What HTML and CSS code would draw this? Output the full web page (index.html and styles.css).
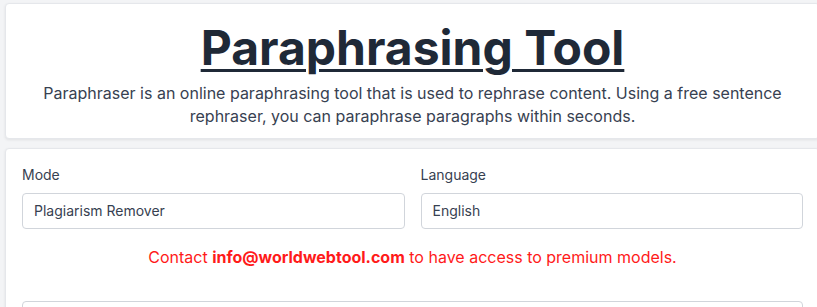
FILE: index.html
```html
<!DOCTYPE html>
<html lang="en">
<head>
  <meta charset="UTF-8" />
  <meta name="viewport" content="width=device-width, initial-scale=1.0"/>
  <title>Paraphrasing Tool</title>
  <link rel="stylesheet" href="styles.css">
</head>
<body>

  <div class="page">
    <div class="card intro">
      <h1><u>Paraphrasing Tool</u></h1>
      <p>Paraphraser is an online paraphrasing tool that is used to rephrase content. Using a free sentence rephraser, you can paraphrase paragraphs within seconds.</p>
    </div>

    <div class="card tool">
      <div class="fields">
        <div class="field">
          <label for="mode">Mode</label>
          <div class="select" id="mode">Plagiarism Remover</div>
        </div>
        <div class="field">
          <label for="lang">Language</label>
          <div class="select" id="lang">English</div>
        </div>
      </div>
      <p class="notice">Contact <b>info@worldwebtool.com</b> to have access to premium models.</p>
      <div class="editor"></div>
    </div>
  </div>

</body>
</html>
```

FILE: styles.css
```css
body {
  margin: 0;
  background: #f3f4f6;
  font-family: Inter, 'Noto Sans', sans-serif;
  color: #1f2937;
  overflow: hidden;
}
.page {
  padding: 3px 0 0 5px;
  width: 815px;
}
.card {
  background: white;
  border: 1px solid #e5e7eb;
  border-radius: 4px;
  box-shadow: 0 1px 3px rgba(0, 0, 0, 0.08);
}
.intro {
  text-align: center;
  padding: 16px 16px 10px;
  margin-bottom: 9px;
}
.intro h1 {
  margin: 0;
  font-size: 48px;
  line-height: 56px;
  font-weight: 700;
  color: #1f2937;
}
.intro u {
  text-decoration-thickness: 3px;
  text-underline-offset: 4px;
}
.intro p {
  margin: 6px 20px 0;
  font-size: 16px;
  line-height: 23px;
  color: #374151;
}
.tool {
  padding: 16px;
}
.fields {
  display: grid;
  grid-template-columns: 1fr 1fr;
  gap: 16px;
}
.field label {
  display: block;
  font-size: 14px;
  line-height: 20px;
  color: #374151;
  margin-bottom: 8px;
}
.select {
  border: 1px solid #d1d5db;
  border-radius: 4px;
  height: 34px;
  line-height: 34px;
  padding: 0 11px;
  font-size: 14px;
  color: #374151;
}
.notice {
  text-align: center;
  color: #ff1a1a;
  font-size: 16px;
  margin: 18px 0 34px;
}
.editor {
  border: 1px solid #d1d5db;
  border-radius: 4px;
  height: 200px;
}
```
